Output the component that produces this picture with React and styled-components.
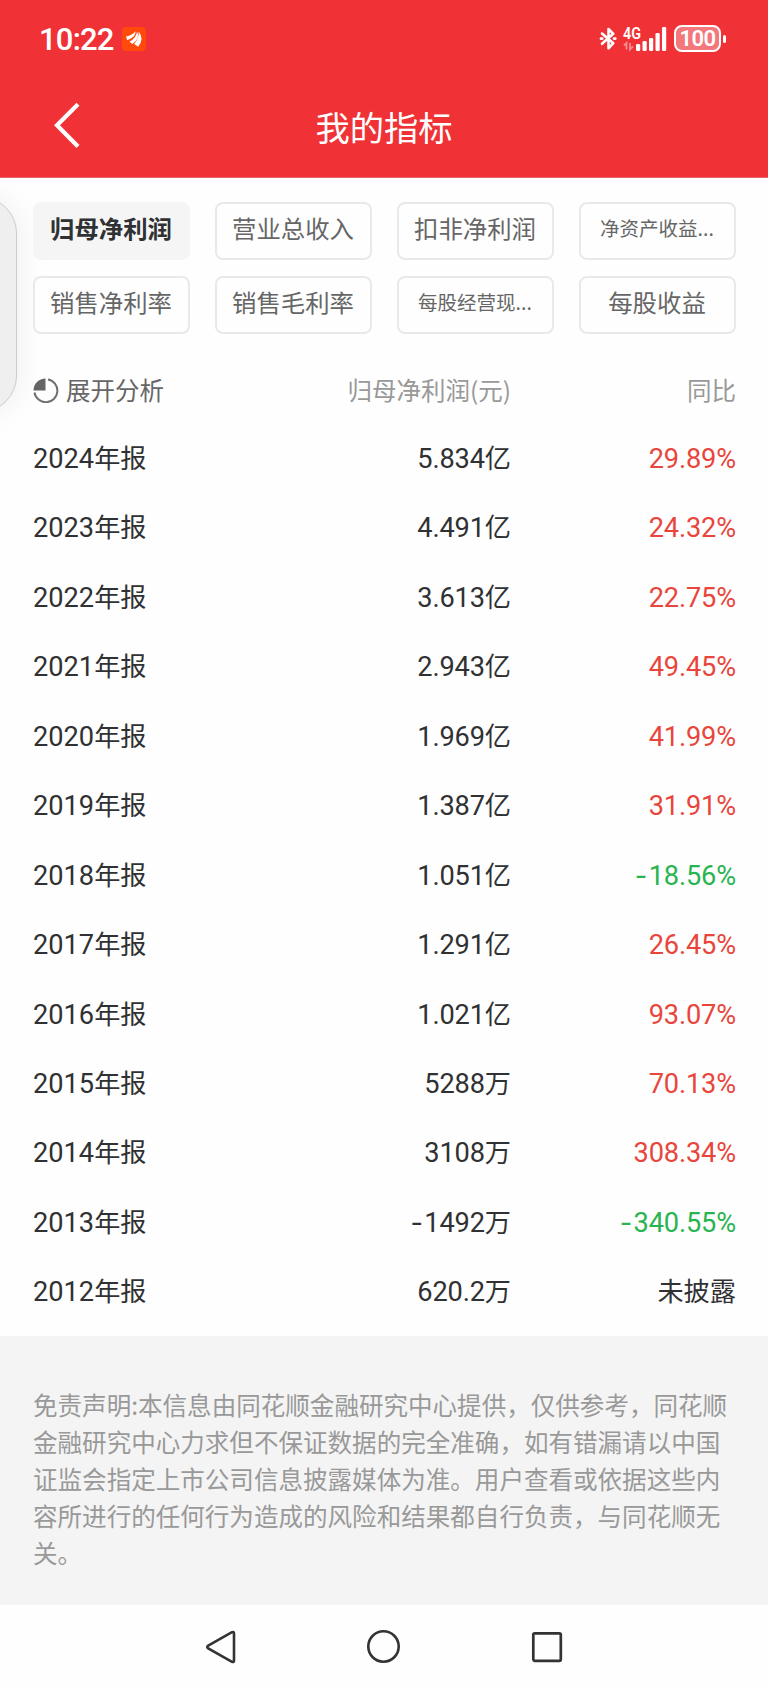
import * as React from "react";
import styled, { createGlobalStyle } from "styled-components";

const metrics = [
  { label: "归母净利润" },
  { label: "营业总收入" },
  { label: "扣非净利润" },
  { label: "净资产收益...", small: true },
  { label: "销售净利率" },
  { label: "销售毛利率" },
  { label: "每股经营现...", small: true },
  { label: "每股收益" },
];

const reports = [
  { year: "2024", value: "5.834", unit: "亿", change: "29.89%" },
  { year: "2023", value: "4.491", unit: "亿", change: "24.32%" },
  { year: "2022", value: "3.613", unit: "亿", change: "22.75%" },
  { year: "2021", value: "2.943", unit: "亿", change: "49.45%" },
  { year: "2020", value: "1.969", unit: "亿", change: "41.99%" },
  { year: "2019", value: "1.387", unit: "亿", change: "31.91%" },
  { year: "2018", value: "1.051", unit: "亿", change: "-18.56%" },
  { year: "2017", value: "1.291", unit: "亿", change: "26.45%" },
  { year: "2016", value: "1.021", unit: "亿", change: "93.07%" },
  { year: "2015", value: "5288", unit: "万", change: "70.13%" },
  { year: "2014", value: "3108", unit: "万", change: "308.34%" },
  { year: "2013", value: "-1492", unit: "万", change: "-340.55%" },
  { year: "2012", value: "620.2", unit: "万", change: null },
];

const Figure = ({ children }) => {
  const negative = children.startsWith("-");
  return (
    <Amount>
      {negative && <Sign>-</Sign>}
      {negative ? children.slice(1) : children}
    </Amount>
  );
};

const Change = ({ value }) => {
  if (!value) {
    return <ChangeCell>未披露</ChangeCell>;
  }
  return (
    <ChangeCell $trend={value.startsWith("-") ? "down" : "up"}>
      <Figure>{value}</Figure>
    </ChangeCell>
  );
};

const App = () => {
  const [selected, setSelected] = React.useState(0);

  return (
    <Page>
      <GlobalStyle />
      <Header>
        <StatusBar>
          <Clock>10:22</Clock>
          <svg width="24" height="24" viewBox="0 0 24 24">
            <rect width="24" height="24" rx="4.5" fill="#ff4a0c" />
            <path d="M4 9.5Q10.500 8.300 13.500 4.200Q14.200 10 5.200 13.200Z" fill="#fff" />
            <path d="M7.500 14.800Q14 11 15.100 4.400Q18.400 11.500 10.400 17Z" fill="#fff" />
            <path d="M12.200 17Q16.800 12 16.800 4.800Q22.500 11.500 16.200 19.800Z" fill="#fff" />
          </svg>
          <Spacer />
          <svg width="68" height="28" viewBox="0 0 68 28">
            <path
              d="M3 8.500L14.300 18.200L9.500 23.300V4L14.300 8.800L3 18.800"
              fill="none"
              stroke="#fff"
              strokeWidth="2.600"
              strokeLinejoin="round"
              strokeLinecap="round"
            />
            <path d="M1.900 13.600h1.400M15 13.600h1.400" stroke="#fff" strokeWidth="2.600" strokeLinecap="round" />
            <text x="24" y="13.500" fill="#fff" fontFamily="Roboto, sans-serif" fontWeight="600" fontSize="16" textLength="18" lengthAdjust="spacingAndGlyphs">
              4G
            </text>
            <path d="M25 20.500L27.500 18V24.500M31 18V24.500L34 21.500" fill="none" stroke="#f8888c" strokeWidth="1.900" />
            <g fill="#fff">
              <rect x="37" y="19" width="4.200" height="7" rx="1.300" />
              <rect x="43.500" y="16" width="4.200" height="10" rx="1.300" />
              <rect x="50" y="13" width="4.200" height="13" rx="1.300" />
              <rect x="56.500" y="8" width="4.200" height="18" rx="1.300" />
              <rect x="63" y="2" width="4.200" height="24" rx="1.300" />
            </g>
          </svg>
          <Battery>
            <BatteryBody>100</BatteryBody>
            <BatteryTip />
          </Battery>
        </StatusBar>
        <TitleBar>
          <BackButton aria-label="返回">
            <svg width="28" height="48" viewBox="0 0 28 48">
              <path d="M25 2.200L4 23.300L25 44.400" fill="none" stroke="#fff" strokeWidth="4.200" />
            </svg>
          </BackButton>
          <Title>我的指标</Title>
        </TitleBar>
      </Header>

      <DrawerHandle />

      <Metrics>
        {metrics.map((metric, index) => (
          <MetricButton
            key={metric.label}
            $active={index === selected}
            $small={metric.small}
            onClick={() => setSelected(index)}
          >
            {metric.label}
          </MetricButton>
        ))}
      </Metrics>

      <TableHead>
        <Expand>
          <svg width="26" height="26" viewBox="0 0 26 26">
            <path d="M12.500 1.500V13.500H.500A12 12 0 0 1 12.500 1.500Z" fill="#666" />
            <path d="M15 2.400A11.500 11.500 0 1 1 1.500 15.500" fill="none" stroke="#707070" strokeWidth="2" />
          </svg>
          展开分析
        </Expand>
        <HeadCell>归母净利润(元)</HeadCell>
        <HeadCell>同比</HeadCell>
      </TableHead>
      <Table>
        {reports.map((report) => (
          <Row key={report.year}>
            <YearCell>
              <Digits>{report.year}</Digits>年报
            </YearCell>
            <ValueCell>
              <Figure>{report.value}</Figure>
              {report.unit}
            </ValueCell>
            <Change value={report.change} />
          </Row>
        ))}
      </Table>

      <Disclaimer>
        免责声明:本信息由同花顺金融研究中心提供，仅供参考，同花顺金融研究中心力求但不保证数据的完全准确，如有错漏请以中国证监会指定上市公司信息披露媒体为准。用户查看或依据这些内容所进行的任何行为造成的风险和结果都自行负责，与同花顺无关。
      </Disclaimer>

      <NavBar>
        <svg width="34" height="36" viewBox="0 0 34 36">
          <path d="M4.200 16.600L28 3.200Q30 2.300 30 4.500V31.500Q30 33.700 28 32.800L4.200 19.400Q2.200 18 4.200 16.600Z" fill="none" stroke="#333" strokeWidth="2.600" />
        </svg>
        <svg width="34" height="36" viewBox="0 0 34 36">
          <circle cx="16.500" cy="17.500" r="15.200" fill="none" stroke="#333" strokeWidth="2.600" />
        </svg>
        <svg width="34" height="36" viewBox="0 0 34 36">
          <rect x="3.300" y="4.300" width="27.500" height="27.500" rx="1.500" fill="none" stroke="#333" strokeWidth="2.700" />
        </svg>
      </NavBar>
    </Page>
  );
};

const GlobalStyle = createGlobalStyle`
  body {
    margin: 0;
    background: #fefefe;
  }
  * {
    box-sizing: border-box;
  }
`;

const Page = styled.div`
  position: relative;
  width: 768px;
  height: 1689px;
  overflow: hidden;
  display: flex;
  flex-direction: column;
  background: #fefefe;
  color: #303133;
  font-family: "Noto Sans CJK SC", sans-serif;
`;

const Header = styled.header`
  height: 178px;
  flex-shrink: 0;
  background: #f03237;
  border-bottom: 1px solid #e5666a;
  color: #fff;
`;

const StatusBar = styled.div`
  display: flex;
  align-items: center;
  height: 77px;
  padding: 0 42px 0 39px;
`;

const Clock = styled.div`
  width: 83px;
  padding-top: 1px;
  font: 500 31px Roboto, sans-serif;
  letter-spacing: -0.8px;
`;

const Spacer = styled.div`
  flex: 1;
`;

const Battery = styled.div`
  display: flex;
  align-items: center;
  margin-left: 7px;
`;

const BatteryBody = styled.div`
  width: 47px;
  height: 27px;
  border: 2px solid #fff;
  border-radius: 8px;
  background: #f4777b;
  font: 600 22px/24px Roboto, sans-serif;
  letter-spacing: -0.5px;
  text-align: center;
`;

const BatteryTip = styled.div`
  width: 3px;
  height: 8px;
  margin-left: 2px;
  border-radius: 2px;
  background: #fff;
`;

const TitleBar = styled.div`
  display: grid;
  grid-template-columns: 1fr auto 1fr;
  align-items: center;
  height: 98px;
  padding: 0 53px;
`;

const BackButton = styled.button`
  display: flex;
  width: 28px;
  padding: 0;
  border: none;
  background: none;
  cursor: pointer;
  margin-bottom: 1px;
`;

const Title = styled.h1`
  margin: 0;
  font-size: 34.3px;
  font-weight: 400;
  line-height: 50px;
`;

const DrawerHandle = styled.div`
  position: absolute;
  top: 197px;
  left: -60px;
  width: 77px;
  height: 215px;
  border: 1px solid #ccc;
  border-radius: 36px;
  background: #efefef;
  box-shadow: 0 0 32px rgba(0, 0, 0, 0.07);
`;

const Metrics = styled.div`
  display: grid;
  grid-template-columns: repeat(4, 157px);
  justify-content: space-between;
  row-gap: 16px;
  padding: 24px 32px 0 33px;
  z-index: 1;
`;

const MetricButton = styled.button`
  height: 58px;
  padding: 0 1px 7px 0;
  border: 2px solid ${(props) => (props.$active ? "#f5f5f5" : "#e9e9e9")};
  border-radius: 8px;
  background: ${(props) => (props.$active ? "#f5f5f5" : "#fefefe")};
  color: ${(props) => (props.$active ? "#303133" : "#666")};
  font-family: inherit;
  font-size: ${(props) => (props.$small ? "19.5px" : "24.4px")};
  font-weight: ${(props) => (props.$active ? 700 : 400)};
  cursor: pointer;
`;

const TableHead = styled.div`
  display: grid;
  grid-template-columns: 235px 243px 225px;
  align-items: center;
  height: 54px;
  margin: 28px 32px 2px 33px;
  font-size: 24.5px;
  color: #999;
`;

const Expand = styled.div`
  display: flex;
  align-items: center;
  gap: 7px;
  color: #666;

  svg {
    margin-top: 2px;
  }
`;

const HeadCell = styled.div`
  text-align: right;
`;

const Table = styled.div`
  padding: 5px 32px 0 33px;
  height: 918px;
`;

const Row = styled.div`
  display: grid;
  grid-template-columns: 235px 243px 225px;
  height: 69.45px;
  font-size: 26.2px;
  line-height: 69px;
`;

const Digits = styled.span`
  font-family: Roboto, sans-serif;
  font-size: 27.2px;
`;

const Amount = styled(Digits)`
  letter-spacing: -0.15px;
`;

const Sign = styled.span`
  margin-right: 1.5px;
  font-family: Inter, sans-serif;
`;

const YearCell = styled.div`
  white-space: nowrap;
`;

const ValueCell = styled.div`
  text-align: right;
`;

const trendColors = { up: "#e8463c", down: "#28b450" };

const ChangeCell = styled.div`
  text-align: right;
  color: ${(props) => trendColors[props.$trend] || "inherit"};
`;

const Disclaimer = styled.p`
  height: 269px;
  margin: 0;
  padding: 51px 33px 0;
  background: #f4f4f4;
  color: #999;
  font-size: 24.55px;
  line-height: 36.95px;
`;

const NavBar = styled.nav`
  flex: 1;
  display: flex;
  justify-content: center;
  align-items: center;
  gap: 129px;
`;

export default App;
